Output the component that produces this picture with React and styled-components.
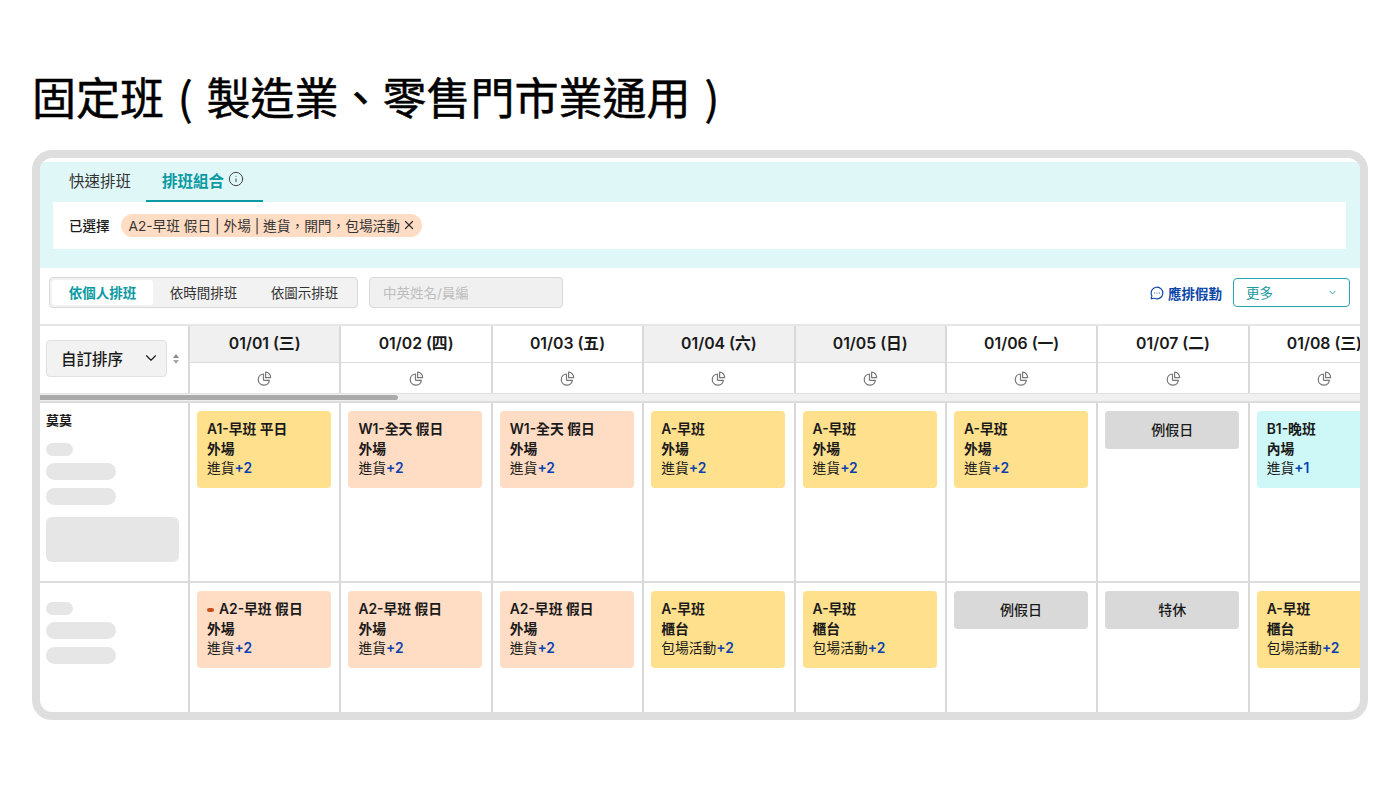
import styled, { createGlobalStyle } from 'styled-components';
import { ChevronDown, Info, MessageCircleMore, X } from 'lucide-react';

const GlobalStyle = createGlobalStyle`
  * {
    box-sizing: border-box;
  }

  body {
    margin: 0;
    background: #fff;
    color: #1a1a1a;
    font-family: Inter, "Noto Sans CJK TC", sans-serif;
  }
`;

const Page = styled.div`
  width: 1400px;
  height: 788px;
  padding: 70px 32px 0;
  overflow: hidden;
`;

const Title = styled.h1`
  margin: 0 0 28px;
  font-family: "Noto Sans CJK TC", sans-serif;
  font-size: 44px;
  font-weight: 400;
  line-height: 52px;
  word-spacing: 4px;
  color: #000;
  -webkit-text-stroke: 0.5px #000;
  white-space: nowrap;
`;

const Frame = styled.div`
  height: 570px;
  border: 8px solid #dedede;
  border-radius: 20px;
  background: #fff;
  overflow: hidden;
  padding-top: 4px;
`;

const TopPanel = styled.div`
  background: #e0f7f8;
  padding: 0 14px 19px 13px;
`;

const Tabs = styled.div`
  display: flex;
  height: 40px;
`;

const Tab = styled.div`
  display: flex;
  align-items: center;
  gap: 4px;
  height: 40px;
  padding: 0 ${(p) => (p.$active ? 19 : 15)}px 3px 16px;
  font-size: 15.5px;
  font-weight: ${(p) => (p.$active ? 600 : 400)};
  color: ${(p) => (p.$active ? '#0a9aa2' : '#333')};
  border-bottom: 2px solid ${(p) => (p.$active ? '#0a9aa2' : 'transparent')};

  svg {
    color: #444;
    margin-top: -1px;
  }
`;

const SelectedBar = styled.div`
  display: flex;
  align-items: center;
  gap: 11px;
  height: 47px;
  padding: 0 0 1px 16px;
  background: #fff;
`;

const SelectedLabel = styled.span`
  font-size: 13.5px;
  font-weight: 500;
`;

const Chip = styled.span`
  display: inline-flex;
  align-items: center;
  gap: 2px;
  height: 23px;
  padding: 0 6px 0 8px;
  border-radius: 12px;
  background: #ffdcc4;
  font-size: 13.7px;
  color: #333;
  white-space: nowrap;
`;

const Toolbar = styled.div`
  display: flex;
  align-items: center;
  height: 56px;
  padding: 0 10px 7px 9px;
`;

const Segments = styled.div`
  display: flex;
  align-items: center;
  width: 309px;
  height: 31px;
  padding: 0 2px;
  background: #f2f2f2;
  border: 1px solid #d9d9d9;
  border-radius: 4px;
`;

const Segment = styled.div`
  flex: 1;
  height: 25px;
  display: flex;
  align-items: center;
  justify-content: center;
  padding-bottom: 1px;
  font-size: 13.5px;
  font-weight: ${(p) => (p.$active ? 600 : 400)};
  color: ${(p) => (p.$active ? '#0a9aa2' : '#333')};
  background: ${(p) => (p.$active ? '#fff' : 'transparent')};
  border-radius: 3px;
`;

const SearchBox = styled.div`
  display: flex;
  align-items: center;
  width: 194px;
  height: 31px;
  margin-left: 11px;
  padding: 0 0 1px 13px;
  background: #f0f0f0;
  border: 1px solid #d9d9d9;
  border-radius: 4px;
  font-size: 13.5px;
  color: #bdbdbd;
`;

const ToolLink = styled.div`
  display: flex;
  align-items: center;
  gap: 4px;
  margin-left: auto;
  font-size: 13.5px;
  font-weight: 600;
  color: #0a46a8;
`;

const MoreButton = styled.div`
  display: flex;
  align-items: center;
  justify-content: space-between;
  width: 117px;
  height: 29px;
  margin-left: 11px;
  padding: 0 11px 1px 12px;
  border: 1px solid #2aa6ad;
  border-radius: 4px;
  font-size: 13.5px;
  color: #1c9aa2;
`;

const Columns = styled.div`
  display: grid;
  grid-template-columns: 150px repeat(8, 151.4px);
  width: 1320px;
  overflow: hidden;
`;

const HeaderRow = styled(Columns)`
  height: 69px;
  border-top: 2px solid #e6e6e6;
`;

const Corner = styled.div`
  display: flex;
  align-items: center;
  gap: 6px;
  padding: 0 0 2px 6px;
  border-right: 2px solid #d9d9d9;
`;

const SortSelect = styled.div`
  display: flex;
  align-items: center;
  justify-content: space-between;
  width: 121px;
  height: 37px;
  padding: 0 6px 2px 14px;
  background: #f2f2f2;
  border: 1px solid #e0e0e0;
  border-radius: 4px;
  font-size: 15.5px;
  font-weight: 500;
`;

const SortArrows = styled.div`
  display: flex;
  flex-direction: column;
  gap: 2px;

  i {
    width: 0;
    height: 0;
    border-left: 3.5px solid transparent;
    border-right: 3.5px solid transparent;
  }

  i:first-child {
    border-bottom: 4px solid #888;
  }

  i:last-child {
    border-top: 4px solid #aaa;
  }
`;

const DateColumn = styled.div`
  display: grid;
  grid-template-rows: 37px 1fr;
  border-right: 2px solid #d9d9d9;
`;

const DateLabel = styled.div`
  display: flex;
  align-items: center;
  justify-content: center;
  padding-bottom: 3px;
  background: ${(p) => (p.$off ? '#f0f0f0' : '#fff')};
  border-bottom: 1px solid #dcdcdc;
  font-size: 15.8px;
  font-weight: 600;
  color: #1a1a1a;
  white-space: nowrap;
`;

const StatCell = styled.div`
  display: flex;
  align-items: center;
  justify-content: center;
  color: #777;
`;

const ScrollTrack = styled.div`
  height: 10px;
  padding-top: 1px;
  background: #f0f0f0;
  border-top: 1px solid #e0e0e0;
  border-bottom: 2px solid #dcdcdc;
`;

const ScrollThumb = styled.div`
  width: 358px;
  height: 5px;
  background: #aaa;
  border-radius: 0 3px 3px 0;
`;

const BodyRow = styled(Columns)`
  height: ${(p) => p.$height}px;
  border-bottom: ${(p) => (p.$last ? 'none' : '2px solid #dcdcdc')};
`;

const PersonCell = styled.div`
  display: flex;
  flex-direction: column;
  align-items: flex-start;
  padding: ${(p) => (p.$named ? '8px' : '19px')} 9px 0 6px;
  border-right: 2px solid #d9d9d9;
`;

const PersonName = styled.div`
  margin-bottom: 14px;
  font-size: 13px;
  font-weight: 700;
  line-height: 18px;
`;

const Skeleton = styled.div`
  width: ${(p) => p.$width}px;
  height: ${(p) => p.$height}px;
  margin-bottom: ${(p) => p.$gap}px;
  background: #e6e6e6;
  border-radius: ${(p) => (p.$block ? 6 : 9)}px;
`;

const ShiftCell = styled.div`
  padding: 8px 7px 0 7px;
  border-right: 2px solid #d9d9d9;
`;

const CARD_COLORS = {
  yellow: '#ffe08d',
  peach: '#ffdcc4',
  teal: '#cef7f7',
  gray: '#d9d9d9',
};

const Card = styled.div`
  width: 134px;
  height: 77px;
  padding: 9px 10px;
  border-radius: 4px;
  background: ${(p) => CARD_COLORS[p.$color]};
  font-size: 13.8px;
  line-height: 19.5px;
`;

const CardLine = styled.div`
  display: flex;
  align-items: center;
  gap: 5px;
  font-weight: ${(p) => (p.$regular ? 400 : 600)};
  white-space: nowrap;
`;

const Plus = styled.b`
  color: #0a3fb0;
  font-weight: 600;
`;

const Mark = styled.i`
  width: 7px;
  height: 4px;
  border-radius: 2px;
  background: #c8501a;
`;

const OffCard = styled.div`
  display: flex;
  align-items: center;
  justify-content: center;
  width: 134px;
  height: 38px;
  padding-bottom: 2px;
  border-radius: 4px;
  background: #d9d9d9;
  font-size: 14px;
  font-weight: 500;
`;

const dates = [
  ['01/01 (三)', true],
  ['01/02 (四)', false],
  ['01/03 (五)', false],
  ['01/04 (六)', true],
  ['01/05 (日)', true],
  ['01/06 (一)', false],
  ['01/07 (二)', false],
  ['01/08 (三)', false],
];

const firstRow = [
  { color: 'yellow', lines: ['A1-早班 平日', '外場', '進貨', '+2'] },
  { color: 'peach', lines: ['W1-全天 假日', '外場', '進貨', '+2'] },
  { color: 'peach', lines: ['W1-全天 假日', '外場', '進貨', '+2'] },
  { color: 'yellow', lines: ['A-早班', '外場', '進貨', '+2'] },
  { color: 'yellow', lines: ['A-早班', '外場', '進貨', '+2'] },
  { color: 'yellow', lines: ['A-早班', '外場', '進貨', '+2'] },
  { off: '例假日' },
  { color: 'teal', lines: ['B1-晚班', '內場', '進貨', '+1'] },
];

const secondRow = [
  { color: 'peach', mark: true, lines: ['A2-早班 假日', '外場', '進貨', '+2'] },
  { color: 'peach', lines: ['A2-早班 假日', '外場', '進貨', '+2'] },
  { color: 'peach', lines: ['A2-早班 假日', '外場', '進貨', '+2'] },
  { color: 'yellow', lines: ['A-早班', '櫃台', '包場活動', '+2'] },
  { color: 'yellow', lines: ['A-早班', '櫃台', '包場活動', '+2'] },
  { off: '例假日' },
  { off: '特休' },
  { color: 'yellow', lines: ['A-早班', '櫃台', '包場活動', '+2'] },
];

const PieIcon = () => (
  <svg width="15" height="15" viewBox="0 0 15 15" fill="none" stroke="currentColor" strokeWidth="1.2" strokeLinejoin="round">
    <path d="M6.5 3A5.6 5.6 0 1 0 12.4 9.4H7.2A.7.7 0 0 1 6.5 8.7Z" />
    <path d="M8.6 1.2A5 5 0 0 1 13.6 6.6H8.6Z" />
  </svg>
);

const Shift = ({ shift }) => (
  <ShiftCell>
    {shift.off ? (
      <OffCard>{shift.off}</OffCard>
    ) : (
      <Card $color={shift.color}>
        <CardLine>
          {shift.mark && <Mark />}
          {shift.lines[0]}
        </CardLine>
        <CardLine>{shift.lines[1]}</CardLine>
        <CardLine $regular>
          <span>
            {shift.lines[2]}
            <Plus>{shift.lines[3]}</Plus>
          </span>
        </CardLine>
      </Card>
    )}
  </ShiftCell>
);

const App = () => (
  <Page>
    <GlobalStyle />
    <Title>固定班 ( 製造業、零售門市業通用 )</Title>
    <Frame>
      <TopPanel>
        <Tabs>
          <Tab>快速排班</Tab>
          <Tab $active>
            排班組合
            <Info size={16} strokeWidth={1.5} />
          </Tab>
        </Tabs>
        <SelectedBar>
          <SelectedLabel>已選擇</SelectedLabel>
          <Chip>
            A2-早班 假日 | 外場 | 進貨，開門，包場活動
            <X size={14} strokeWidth={2.2} />
          </Chip>
        </SelectedBar>
      </TopPanel>

      <Toolbar>
        <Segments>
          <Segment $active>依個人排班</Segment>
          <Segment>依時間排班</Segment>
          <Segment>依圖示排班</Segment>
        </Segments>
        <SearchBox>中英姓名/員編</SearchBox>
        <ToolLink>
          <MessageCircleMore size={14} strokeWidth={2} />
          應排假勤
        </ToolLink>
        <MoreButton>
          更多
          <ChevronDown size={11} />
        </MoreButton>
      </Toolbar>

      <HeaderRow>
        <Corner>
          <SortSelect>
            自訂排序
            <ChevronDown size={18} strokeWidth={1.5} />
          </SortSelect>
          <SortArrows>
            <i />
            <i />
          </SortArrows>
        </Corner>
        {dates.map(([label, off]) => (
          <DateColumn key={label}>
            <DateLabel $off={off}>{label}</DateLabel>
            <StatCell>
              <PieIcon />
            </StatCell>
          </DateColumn>
        ))}
      </HeaderRow>

      <ScrollTrack>
        <ScrollThumb />
      </ScrollTrack>

      <BodyRow $height={180}>
        <PersonCell $named>
          <PersonName>莫莫</PersonName>
          <Skeleton $width={27} $height={13} $gap={7} />
          <Skeleton $width={70} $height={17} $gap={8} />
          <Skeleton $width={70} $height={17} $gap={12} />
          <Skeleton $block $width={133} $height={45} $gap={0} />
        </PersonCell>
        {firstRow.map((shift, i) => (
          <Shift key={i} shift={shift} />
        ))}
      </BodyRow>

      <BodyRow $height={129} $last>
        <PersonCell>
          <Skeleton $width={27} $height={13} $gap={7} />
          <Skeleton $width={70} $height={17} $gap={8} />
          <Skeleton $width={70} $height={17} $gap={0} />
        </PersonCell>
        {secondRow.map((shift, i) => (
          <Shift key={i} shift={shift} />
        ))}
      </BodyRow>
    </Frame>
  </Page>
);

export default App;
